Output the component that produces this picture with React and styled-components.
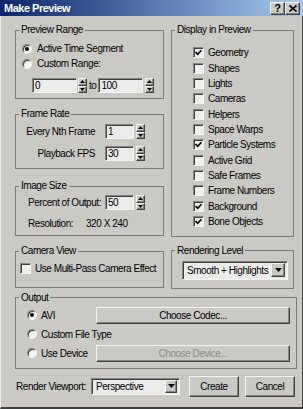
import React from 'react'
import styled, { createGlobalStyle, css } from 'styled-components'

const GlobalStyle = createGlobalStyle`
  html, body {
    margin: 0;
    padding: 0;
    background: #cac9c4;
  }
  body {
    font-family: "Liberation Sans", Arial, sans-serif;
    font-size: 10px;
    letter-spacing: -0.45px;
    color: #000;
  }
  * {
    box-sizing: border-box;
  }
`

const raised = css`
  border: 1px solid;
  border-color: #f4f4f2 #404040 #404040 #f4f4f2;
  box-shadow: inset -1px -1px 0 #85857f;
`

const sunken = css`
  border: 1px solid;
  border-color: #85857f #f4f4f2 #f4f4f2 #85857f;
  box-shadow: inset 1px 1px 0 #404040;
`

const Window = styled.div`
  width: 303px;
  height: 409px;
  display: flex;
  flex-direction: column;
  background: #cac9c4;
`

const TitleBar = styled.div`
  height: 16px;
  flex: none;
  display: flex;
  align-items: center;
  padding: 0 3px 0 4px;
  background: linear-gradient(to right, #0a246a, #a6caf0);
`

const Title = styled.span`
  flex: 1;
  color: #fff;
  font-weight: bold;
  font-size: 11px;
  letter-spacing: -0.5px;
`

const TitleButton = styled.button`
  width: 15px;
  height: 13px;
  padding: 0;
  ${raised};
  background: #cac9c4;
  font: bold 11px "Liberation Sans", Arial, sans-serif;
  line-height: 11px;
  display: flex;
  align-items: center;
  justify-content: center;
  color: #000;
`

const Frame = styled.div`
  flex: 1;
  border-left: 1px solid #ececea;
  border-right: 1px solid #404040;
  border-bottom: 2px solid #404040;
  padding: 8px 5px 0 14px;
  display: flex;
  flex-direction: column;
`

const Columns = styled.div`
  display: grid;
  grid-template-columns: 149px 123px;
  column-gap: 7px;
  align-items: start;
`

const Column = styled.div`
  display: flex;
  flex-direction: column;
`

const Group = styled.fieldset`
  margin: ${p => p.$mt || 0}px 0 0 0;
  padding: 0;
  min-width: 0;
  border: 1px solid #7a7a7a;
`

const Legend = styled.legend`
  margin-left: 3px;
  padding: 0 2px;
  font-size: 10px;
  line-height: 12px;
  height: 12px;
`

const GroupBody = styled.div`
  padding: ${p => p.$pad};
`

const RadioRow = styled.label`
  display: flex;
  align-items: center;
  height: 15px;
  white-space: nowrap;
`

const Radio = styled.span`
  width: 10px;
  height: 10px;
  flex: none;
  border-radius: 50%;
  background: #f4f4f2;
  border: 1px solid;
  border-color: #85857f #f4f4f2 #f4f4f2 #85857f;
  box-shadow: inset 1px 1px 0 #404040;
  display: flex;
  align-items: center;
  justify-content: center;
  margin-right: ${p => p.$mr || 5}px;

  &::after {
    content: '';
    width: 4px;
    height: 4px;
    border-radius: 50%;
    background: ${p => (p.$on ? '#000' : 'transparent')};
  }
`

const SpinRow = styled.div`
  display: flex;
  align-items: center;
  margin-top: 7px;
  padding-left: 10px;
  height: 15px;
`

const Field = styled.div`
  width: ${p => p.$w}px;
  height: 15px;
  flex: none;
  ${sunken};
  background: #ebebea;
  padding-left: 2px;
  display: flex;
  align-items: center;
`

const SpinArrows = styled.div`
  width: 9px;
  height: 15px;
  flex: none;
  margin-left: ${p => p.$gap}px;
  display: flex;
  flex-direction: column;
`

const SpinHalf = styled.div`
  flex: 1;
  ${raised};
  background: #cac9c4;
  display: flex;
  align-items: center;
  justify-content: center;
`

const ToText = styled.span`
  margin: 0 2px 0 2px;
`

const FieldRow = styled.div`
  display: flex;
  align-items: center;
  height: 15px;
  margin-top: ${p => p.$mt || 0}px;
`

const FieldLabel = styled.span`
  width: ${p => p.$w}px;
  margin-right: ${p => p.$mr}px;
  text-align: right;
  white-space: nowrap;
`

const ResRow = styled.div`
  display: flex;
  align-items: center;
  height: 13px;
  margin-top: 7px;
  padding-left: 6px;
`

const ResLabel = styled.span`
  width: 58px;
`

const CheckList = styled.div`
  display: flex;
  flex-direction: column;
`

const CheckRow = styled.label`
  display: flex;
  align-items: center;
  height: ${p => p.$h || 15}px;
  white-space: nowrap;
`

const Box = styled.span`
  width: 11px;
  height: 11px;
  flex: none;
  ${sunken};
  background: #efefed;
  margin-right: 4px;
  display: flex;
  align-items: center;
  justify-content: center;
`

const Dropdown = styled.div`
  width: ${p => p.$w}px;
  height: ${p => p.$h}px;
  flex: none;
  ${sunken};
  background: #ebebea;
  display: flex;
  align-items: center;
  justify-content: space-between;
  padding: 0 2px 0 4px;
  white-space: nowrap;
`

const DropButton = styled.span`
  width: ${p => p.$w}px;
  height: ${p => p.$h}px;
  flex: none;
  ${raised};
  background: #cac9c4;
  display: flex;
  align-items: center;
  justify-content: center;
`

const Button = styled.button`
  height: ${p => p.$h || 17}px;
  width: ${p => (p.$w ? `${p.$w}px` : 'auto')};
  flex: ${p => (p.$w ? 'none' : 1)};
  margin-left: ${p => p.$ml || 0}px;
  padding: 0;
  ${raised};
  background: #cac9c4;
  font: inherit;
  letter-spacing: inherit;
  color: ${p => (p.disabled ? '#8c8c88' : '#000')};
`

const OutRow = styled.div`
  display: flex;
  align-items: center;
  height: 17px;
  & + & {
    margin-top: 2px;
  }
`

const OutChoice = styled(RadioRow)`
  width: 69px;
  height: 17px;
`

const Footer = styled.div`
  display: flex;
  align-items: center;
  height: 21px;
  margin-top: 7px;
  padding-left: 1px;
`

const FooterLabel = styled.span`
  width: 75px;
  white-space: nowrap;
`

function Tri({ up }) {
  return (
    <svg width="5" height="3" viewBox="0 0 5 3">
      <path d={up ? 'M2.5 0L5 3H0Z' : 'M0 0H5L2.5 3Z'} fill="#000" />
    </svg>
  )
}

function DownArrow() {
  return (
    <svg width="7" height="4" viewBox="0 0 7 4">
      <path d="M0 0H7L3.5 4Z" fill="#000" />
    </svg>
  )
}

function Spinner({ value, width, gap = 2 }) {
  return (
    <>
      <Field $w={width}>{value}</Field>
      <SpinArrows $gap={gap}>
        <SpinHalf><Tri up /></SpinHalf>
        <SpinHalf><Tri /></SpinHalf>
      </SpinArrows>
    </>
  )
}

function Check({ on, label, h }) {
  return (
    <CheckRow $h={h}>
      <Box>
        {on && (
          <svg width="7" height="7" viewBox="0 0 7 7">
            <path d="M0.6 3.2L2.7 5.3L6.4 1.2" stroke="#000" strokeWidth="1.7" fill="none" />
          </svg>
        )}
      </Box>
      {label}
    </CheckRow>
  )
}

const displayItems = [
  ['Geometry', true],
  ['Shapes', false],
  ['Lights', false],
  ['Cameras', false],
  ['Helpers', false],
  ['Space Warps', false],
  ['Particle Systems', true],
  ['Active Grid', false],
  ['Safe Frames', false],
  ['Frame Numbers', false],
  ['Background', true],
  ['Bone Objects', true],
]

export default function App() {
  return (
    <>
      <GlobalStyle />
      <Window>
        <TitleBar>
          <Title>Make Preview</Title>
          <TitleButton>?</TitleButton>
          <TitleButton>
            <svg width="8" height="7" viewBox="0 0 8 7">
              <path d="M0.5 0.5L7.5 6.5M7.5 0.5L0.5 6.5" stroke="#000" strokeWidth="1.6" />
            </svg>
          </TitleButton>
        </TitleBar>

        <Frame>
          <Columns>
            <Column>
              <Group>
                <Legend>Preview Range</Legend>
                <GroupBody $pad="5px 0 5px 6px">
                  <RadioRow><Radio $on />Active Time Segment</RadioRow>
                  <RadioRow><Radio />Custom Range:</RadioRow>
                  <SpinRow>
                    <Spinner value="0" width={45} gap={1} />
                    <ToText>to</ToText>
                    <Spinner value="100" width={45} />
                  </SpinRow>
                </GroupBody>
              </Group>

              <Group $mt={9}>
                <Legend>Frame Rate</Legend>
                <GroupBody $pad="4px 0 7px 6px">
                  <FieldRow>
                    <FieldLabel $w={73} $mr={10}>Every Nth Frame</FieldLabel>
                    <Spinner value="1" width={29} />
                  </FieldRow>
                  <FieldRow $mt={7}>
                    <FieldLabel $w={73} $mr={10}>Playback FPS</FieldLabel>
                    <Spinner value="30" width={29} />
                  </FieldRow>
                </GroupBody>
              </Group>

              <Group $mt={11}>
                <Legend>Image Size</Legend>
                <GroupBody $pad="3px 0 5px 6px">
                  <FieldRow>
                    <FieldLabel $w={79} $mr={4}>Percent of Output:</FieldLabel>
                    <Spinner value="50" width={29} />
                  </FieldRow>
                  <ResRow>
                    <ResLabel>Resolution:</ResLabel>
                    <span>320 X 240</span>
                  </ResRow>
                </GroupBody>
              </Group>

              <Group $mt={9}>
                <Legend>Camera View</Legend>
                <GroupBody $pad="4px 0 11px 4px">
                  <Check label="Use Multi-Pass Camera Effect" />
                </GroupBody>
              </Group>
            </Column>

            <Column>
              <Group>
                <Legend>Display in Preview</Legend>
                <GroupBody $pad="9px 0 6.5px 21px">
                  <CheckList>
                    {displayItems.map(([label, on]) => (
                      <Check key={label} label={label} on={on} h={15.36} />
                    ))}
                  </CheckList>
                </GroupBody>
              </Group>

              <Group $mt={8}>
                <Legend>Rendering Level</Legend>
                <GroupBody $pad="4px 0 8px 10px">
                  <Dropdown $w={106} $h={19}>
                    Smooth + Highlights
                    <DropButton $w={14} $h={14}><DownArrow /></DropButton>
                  </Dropdown>
                </GroupBody>
              </Group>
            </Column>
          </Columns>

          <Group $mt={3}>
            <Legend>Output</Legend>
            <GroupBody $pad="3px 6px 6px 11px">
              <OutRow>
                <OutChoice><Radio $on $mr={4} />AVI</OutChoice>
                <Button>Choose Codec...</Button>
              </OutRow>
              <OutRow>
                <OutChoice><Radio $mr={4} />Custom File Type</OutChoice>
              </OutRow>
              <OutRow>
                <OutChoice><Radio $mr={4} />Use Device</OutChoice>
                <Button disabled>Choose Device...</Button>
              </OutRow>
            </GroupBody>
          </Group>

          <Footer>
            <FooterLabel>Render Viewport:</FooterLabel>
            <Dropdown $w={89} $h={17}>
              Perspective
              <DropButton $w={12} $h={13}><DownArrow /></DropButton>
            </Dropdown>
            <Button $w={50} $h={21} $ml={9}>Create</Button>
            <Button $w={50} $h={21} $ml={6}>Cancel</Button>
          </Footer>
        </Frame>
      </Window>
    </>
  )
}
